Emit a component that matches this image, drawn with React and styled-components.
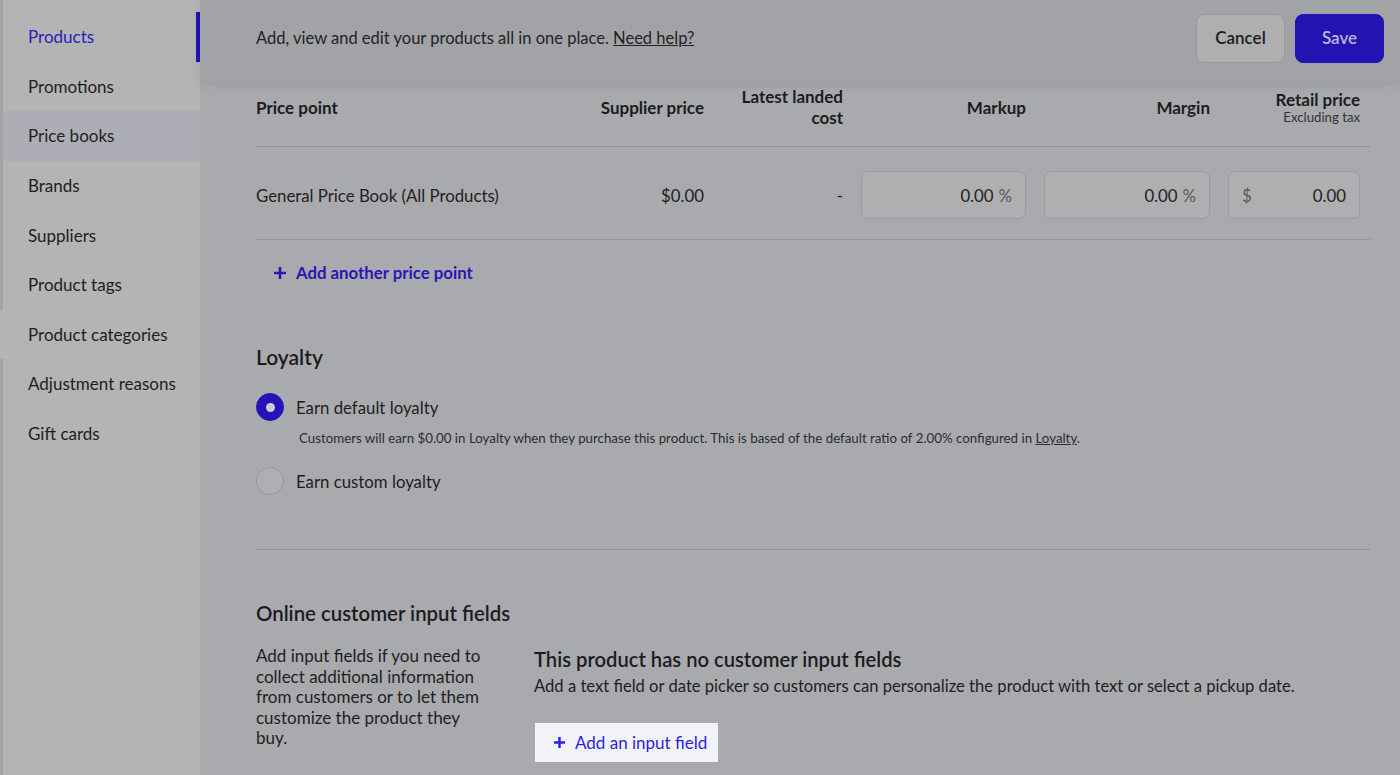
import React from "react";
import styled, { createGlobalStyle } from "styled-components";

const Global = createGlobalStyle`
  * { box-sizing: border-box; }
  html, body { margin: 0; padding: 0; }
  body {
    background: #a9aaae;
    font-family: Lato, "Open Sans", Arial, sans-serif;
    color: #1e1e20;
    overflow: hidden;
  }
`;

const Page = styled.div`
  display: flex;
  width: 1400px;
  height: 775px;
  overflow: hidden;
`;

const Sidebar = styled.nav`
  width: 200px;
  flex-shrink: 0;
  background: #b4b4b4;
  border-left: 3px solid #a3a3a6;
  padding-top: 12px;
  display: flex;
  flex-direction: column;
`;

const NavItem = styled.div`
  height: 49.6px;
  display: flex;
  align-items: center;
  padding-left: 25px;
  font-size: 17px;
  color: ${(p) => (p.$active ? "#2a1db8" : "#1e1e20")};
  background: ${(p) => (p.$hover ? "#adaeb5" : "transparent")};
  border-right: 4px solid ${(p) => (p.$active ? "#1f12b8" : "transparent")};
  ${(p) =>
    p.$edge &&
    `margin-left: -3px; padding-left: 28px; background: #b4b4b4;`}
`;

const Main = styled.main`
  flex: 1;
  display: flex;
  flex-direction: column;
  min-width: 0;
`;

const Header = styled.header`
  height: 82px;
  flex-shrink: 0;
  background: #a2a3a7;
  display: flex;
  align-items: center;
  justify-content: space-between;
  padding: 0 16px 6px 56px;
  box-shadow: 0 3px 12px rgba(0, 0, 0, 0.09);
  position: relative;
  z-index: 1;
`;

const Intro = styled.p`
  margin: 0;
  font-size: 16.5px;
  color: #222224;
  a { color: inherit; text-decoration: underline; }
`;

const Actions = styled.div`
  display: flex;
  gap: 10px;
`;

const Button = styled.button`
  height: 49px;
  width: 89px;
  border-radius: 8px;
  font-family: inherit;
  font-size: 17px;
  font-weight: 600;
  padding: 0 0 2px;
  cursor: pointer;
  border: 1px solid ${(p) => (p.$primary ? "#2413b3" : "#98989b")};
  background: ${(p) => (p.$primary ? "#2413b3" : "#afafb0")};
  color: ${(p) => (p.$primary ? "#bcb8dd" : "#1c1c1e")};
`;

const Content = styled.div`
  padding: 0 30px 0 56px;
  display: flex;
  flex-direction: column;
`;

const Grid = styled.div`
  display: grid;
  grid-template-columns: 300px 130px 121px 165px 166px 132px;
  column-gap: 18px;
  padding-right: 10px;
  align-items: center;
  border-bottom: 1px solid #939397;
  padding-top: ${(p) => p.$pt}px;
  padding-bottom: ${(p) => p.$pb}px;
`;

const Th = styled.div`
  font-size: 17px;
  font-weight: 700;
  line-height: 21px;
  text-align: ${(p) => (p.$left ? "left" : "right")};
  color: #1c1c1e;
`;

const Sub = styled.div`
  font-size: 13.2px;
  font-weight: 400;
  line-height: 15px;
  color: #333336;
`;

const Td = styled.div`
  font-size: 16.8px;
  text-align: ${(p) => (p.$left ? "left" : "right")};
  color: #1e1e20;
`;

const Field = styled.div`
  height: 48px;
  border: 1px solid #9a9a9e;
  border-radius: 7px;
  background: #afafb1;
  display: flex;
  align-items: center;
  padding: 0 13px;
  font-size: 16.8px;
  gap: 5px;
`;

const FieldValue = styled.span`
  flex: 1;
  text-align: right;
  color: #222224;
`;

const Unit = styled.span`
  color: #58585c;
`;

const AddLink = styled.a`
  display: inline-flex;
  align-items: center;
  gap: 9px;
  margin: 22px 0 0 17px;
  font-size: 16.8px;
  font-weight: 700;
  color: #2b16b4;
  align-self: flex-start;
  cursor: pointer;
`;

const Plus = ({ color, size = 14 }) => (
  <svg width={size} height={size} viewBox="0 0 14 14">
    <path d="M7 1v12M1 7h12" stroke={color} strokeWidth="2.6" strokeLinecap="butt" />
  </svg>
);

const SectionTitle = styled.h2`
  margin: ${(p) => p.$mt}px 0 0;
  font-size: ${(p) => p.$size || 20.4}px;
  line-height: 26px;
  font-weight: 600;
  color: #1c1c1e;
`;

const RadioRow = styled.label`
  display: flex;
  align-items: center;
  gap: 12px;
  margin-top: ${(p) => p.$mt}px;
  font-size: 16.8px;
  color: #1e1e20;
`;

const RadioDot = styled.span`
  width: 28px;
  height: 28px;
  border-radius: 50%;
  flex-shrink: 0;
  display: flex;
  align-items: center;
  justify-content: center;
  background: ${(p) => (p.$on ? "#2513b8" : "#afafb1")};
  border: 1px solid ${(p) => (p.$on ? "#2513b8" : "#98989c")};
  &::after {
    content: "";
    display: ${(p) => (p.$on ? "block" : "none")};
    width: 9px;
    height: 9px;
    border-radius: 50%;
    background: #cfcfd8;
  }
`;

const Help = styled.p`
  margin: 9px 0 0 43px;
  font-size: 13.3px;
  line-height: 17px;
  color: #2c2c2f;
  a { color: inherit; text-decoration: underline; }
`;

const Divider = styled.hr`
  margin: 54px 0 0;
  border: 0;
  border-top: 1px solid #939397;
`;

const Columns = styled.div`
  display: flex;
  gap: 50px;
  margin-top: 20px;
`;

const Describe = styled.p`
  margin: 0;
  width: 228px;
  font-size: 17px;
  line-height: 20.5px;
  color: #1e1e20;
`;

const Empty = styled.div`
  display: flex;
  flex-direction: column;
  align-items: flex-start;
`;

const EmptyTitle = styled.h3`
  margin: 1px 0 0;
  font-size: 20.2px;
  line-height: 24px;
  font-weight: 600;
  color: #1c1c1e;
`;

const EmptyText = styled.p`
  margin: 5px 0 0;
  font-size: 16.6px;
  line-height: 20px;
  color: #1e1e20;
`;

const SpotButton = styled.button`
  margin-top: 27px;
  margin-left: 1px;
  height: 39px;
  width: 183px;
  border: 0;
  padding: 0 0 0 18px;
  background: #f2f3f9;
  color: #2b1fe0;
  font-family: inherit;
  font-size: 17px;
  display: flex;
  align-items: center;
  justify-content: flex-start;
  gap: 9px;
  cursor: pointer;
`;

const nav = [
  "Products",
  "Promotions",
  "Price books",
  "Brands",
  "Suppliers",
  "Product tags",
  "Product categories",
  "Adjustment reasons",
  "Gift cards",
];

export default function App() {
  return (
    <>
      <Global />
      <Page>
        <Sidebar>
          {nav.map((n) => (
            <NavItem
              key={n}
              $active={n === "Products"}
              $hover={n === "Price books"}
              $edge={n === "Product categories"}
            >
              {n}
            </NavItem>
          ))}
        </Sidebar>
        <Main>
          <Header>
            <Intro>
              Add, view and edit your products all in one place. <a>Need help?</a>
            </Intro>
            <Actions>
              <Button>Cancel</Button>
              <Button $primary>Save</Button>
            </Actions>
          </Header>
          <Content>
            <Grid $pt={4} $pb={18}>
              <Th $left>Price point</Th>
              <Th>Supplier price</Th>
              <Th>
                Latest landed
                <br />
                cost
              </Th>
              <Th>Markup</Th>
              <Th>Margin</Th>
              <Th>
                Retail price
                <Sub>Excluding tax</Sub>
              </Th>
            </Grid>
            <Grid $pt={24} $pb={20}>
              <Td $left>General Price Book (All Products)</Td>
              <Td>$0.00</Td>
              <Td>-</Td>
              <Field>
                <FieldValue>0.00</FieldValue>
                <Unit>%</Unit>
              </Field>
              <Field>
                <FieldValue>0.00</FieldValue>
                <Unit>%</Unit>
              </Field>
              <Field>
                <Unit>$</Unit>
                <FieldValue>0.00</FieldValue>
              </Field>
            </Grid>
            <AddLink>
              <Plus color="#2b16b4" />
              Add another price point
            </AddLink>

            <SectionTitle $mt={61} $size={21}>Loyalty</SectionTitle>
            <RadioRow $mt={23}>
              <RadioDot $on />
              Earn default loyalty
            </RadioRow>
            <Help>
              Customers will earn $0.00 in Loyalty when they purchase this product. This is
              based of the default ratio of 2.00% configured in <a>Loyalty</a>.
            </Help>
            <RadioRow $mt={20}>
              <RadioDot />
              Earn custom loyalty
            </RadioRow>
            <Divider />

            <SectionTitle $mt={50}>Online customer input fields</SectionTitle>
            <Columns>
              <Describe>
                Add input fields if you need to collect additional information from
                customers or to let them customize the product they buy.
              </Describe>
              <Empty>
                <EmptyTitle>This product has no customer input fields</EmptyTitle>
                <EmptyText>
                  Add a text field or date picker so customers can personalize the product
                  with text or select a pickup date.
                </EmptyText>
                <SpotButton>
                  <Plus color="#2b1fe0" size={13} />
                  Add an input field
                </SpotButton>
              </Empty>
            </Columns>
          </Content>
        </Main>
      </Page>
    </>
  );
}
